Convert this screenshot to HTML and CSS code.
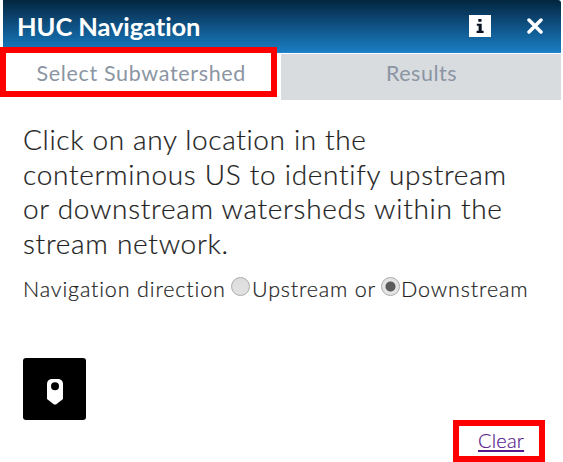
FILE: index.html
```html
<!DOCTYPE html>
<html lang="en">
<head>
<meta charset="utf-8">
<title>HUC Navigation</title>
<link rel="stylesheet" href="styles.css">
</head>
<body>
<main class="panel">
  <header class="titlebar">
    <h1>HUC Navigation</h1>
    <svg class="info" width="22" height="22" viewBox="0 0 22 22"><path fill="#fff" d="M0 0h22v22H0z"/><path fill="#071322" d="M9.300 4h3.200v2.800H9.300zM7.800 8.700h4.900v7.100h1.900V18H7.600v-2.200h2V10.800H7.800z"/></svg>
    <svg class="close" width="16" height="16" viewBox="0 0 16 16"><path d="M2 2l12 12M14 2L2 14" stroke="#fff" stroke-width="3.5" stroke-linecap="round"/></svg>
  </header>
  <nav class="tabs">
    <div class="tab active"><span>Select Subwatershed</span></div>
    <div class="tab results"><span>Results</span></div>
  </nav>
  <section class="content">
    <p class="intro"><span class="l1">Click on any location in the</span><br><span class="l2">conterminous US to identify upstream</span><br><span class="l3">or downstream watersheds within the</span><br><span class="l4">stream network.</span></p>
    <div class="direction">
      <span class="nav-label">Navigation direction</span>
      <i class="radio"></i><span class="up-label">Upstream or</span>
      <i class="radio checked"></i><span class="down-label">Downstream</span>
    </div>
    <div class="pick"><svg width="16" height="26" viewBox="0 0 16 26"><path fill="#fff" fill-rule="evenodd" d="M4 0h8q4 1 4 5v15l-7 5.500H7L0 20V5Q0 1 4 0zM8 3.200a4 4 0 1 0 0 8 4 4 0 0 0 0-8z"/></svg></div>
    <div class="clear"><a href="#">Clear</a></div>
  </section>
</main>
</body>
</html>
```
FILE: styles.css
```css
* { box-sizing: border-box; }
body { margin: 0; background: #fff; overflow: hidden; font-family: Lato, "Open Sans", sans-serif; }
.panel { width: 563px; height: 462px; }
.titlebar { display: flex; height: 53px; margin: 0 2px 0 3px; padding-left: 14px; background: linear-gradient(#02263f 0, #0b4069 30%, #1469a6 75%, #197abd 96%, #2188d0 100%); border-radius: 0 3px 0 0; color: #fff; }
h1 { margin: 0; flex: 1; font-size: 25.5px; font-weight: 700; line-height: 53px; letter-spacing: -.1px; white-space: nowrap; }
.info { margin: 15px 36px 0 0; }
.close { margin: 18px 18px 0 0; }
.tabs { display: flex; height: 47px; justify-content: space-between; padding-right: 2px; color: #8b95a3; font-size: 21.5px; line-height: 40px; white-space: nowrap; }
.tab.active { width: 277px; height: 50px; margin-top: -6px; border: 6px solid #f00; background: #fff; padding-left: 30.5px; position: relative; letter-spacing: .66px; }
.results { width: 280px; margin-top: 1px; padding-left: 105px; background: #d8dcdf; line-height: 39px; letter-spacing: .5px; }
.content { padding-left: 23px; color: #222; font-weight: 300; -webkit-text-stroke: .2px; }
.intro { margin: 22px 0 0; font-size: 28px; line-height: 34.5px; white-space: nowrap; }
.l1 { letter-spacing: .65px; }
.l2, .l3 { letter-spacing: .71px; }
.l4 { letter-spacing: .72px; }
.direction { display: flex; height: 30px; margin-top: 14px; align-items: center; font-size: 21.5px; white-space: nowrap; }
.nav-label { width: 208px; letter-spacing: .85px; }
.radio { width: 19px; height: 19px; flex: none; margin-top: -6px; border: 1.500px solid #aaa; border-radius: 50%; background: linear-gradient(#ddd, #e2e2e2); }
.up-label { width: 129px; margin-left: 2px; letter-spacing: .8px; }
.down-label { margin-left: 1px; letter-spacing: .88px; }
.checked { background: radial-gradient(circle, #5c5c5c 0 4.500px, #e4e4e4 5.500px); }
.pick { display: flex; width: 63px; height: 62px; margin-top: 54px; justify-content: center; padding-top: 21px; border-radius: 3px; background: #000; }
.clear { width: 92px; height: 42px; border: 6px solid #f00; margin-left: 430px; padding-left: 19px; font-size: 20px; line-height: 29px; letter-spacing: .2px; }
.clear a { color: #551a8b; text-underline-offset: 2px; }
```
